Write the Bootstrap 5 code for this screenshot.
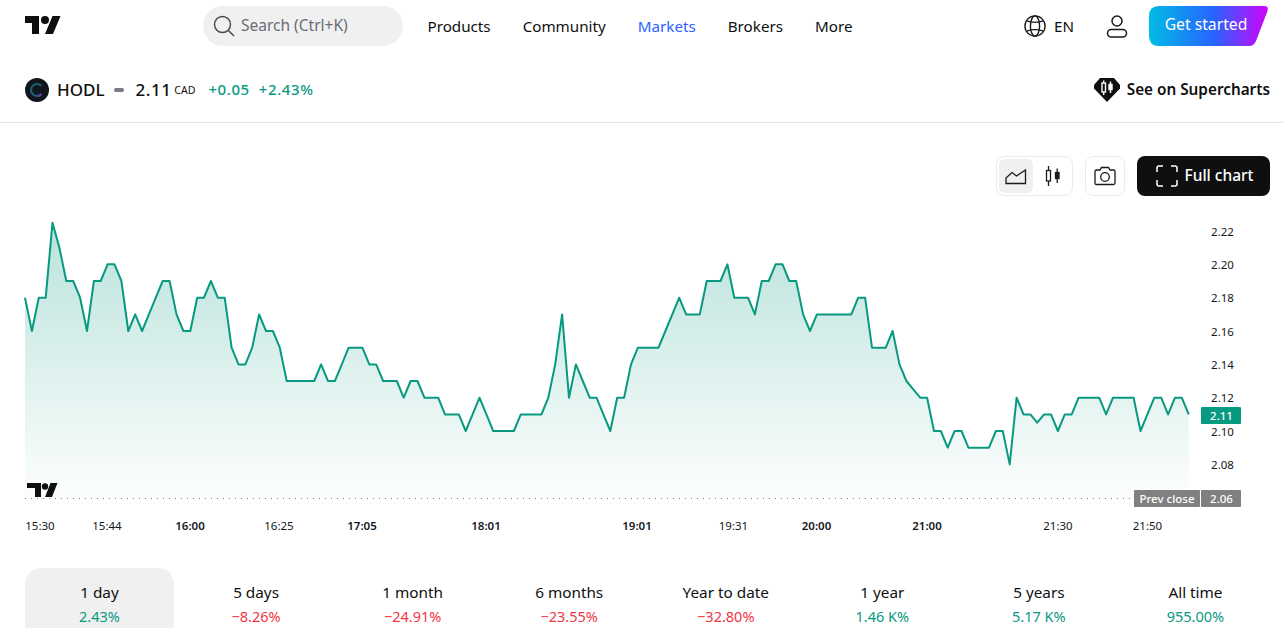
<!DOCTYPE html>
<html lang="en">
<head>
<meta charset="utf-8">
<title>HODL chart</title>
<link href="https://cdn.jsdelivr.net/npm/bootstrap@5.3.0/dist/css/bootstrap.min.css" rel="stylesheet">
<style>
html,body{overflow:hidden;height:628px;background:#fff}
body{font-family:"Noto Sans","Liberation Sans",sans-serif;color:#0f0f0f;font-size:16px}
.tv-head{height:52px;padding:6px 14px 0 25px}
.tv-logo{width:36px;height:28px;margin-top:6px;margin-right:142px;display:block;fill:#0f0f0f}
.tv-search{width:200px;height:40px;border-radius:20px;background:#f0f0f0;color:#6a6d78;font-size:15.500px;padding:0 0 0 10px;gap:6px;margin-right:24.500px}
.tv-nav{height:40px}
.tv-link{color:#0f0f0f;text-decoration:none;font-size:15.200px;margin-right:32px;white-space:nowrap}
.tv-link.is-on{color:#2962ff}
.tv-side{height:40px}
.tv-lang{margin:0 0 0 8px}
.tv-user{margin:0 21px 0 32px}
.tv-get{width:120px;height:40px;border:0;color:#fff;font-size:15.700px;padding:0 6px 3px 0;background:linear-gradient(90deg,#00bce5 0%,#2962ff 55%,#d500f9 100%);clip-path:path("M10 0H115Q120 0 118.500 5L107 35Q105 40 100 40H10Q0 40 0 30V10Q0 0 10 0Z")}
.tv-sym{height:71px;padding:5px 13px 0 25px;border-bottom:1px solid #e0e3eb}
.tv-coin{width:24px;height:24px;display:block}
.tv-name{font-size:17px;font-weight:500;margin-left:8px}
.tv-dash{width:10px;height:4px;border-radius:2px;background:#787b86;margin:0 12px 0 9px}
.tv-price{font-size:17px;font-weight:500;letter-spacing:.5px}
.tv-cur{font-size:10.500px;margin:3px 13px 0 3px}
.tv-chg{font-size:15px;font-weight:500;color:#089981;margin-right:9px;letter-spacing:.6px}
.tv-super{font-size:15.300px;font-weight:600;color:#0f0f0f;text-decoration:none;gap:7px}
.tv-tools{padding:33px 13px 0 0;gap:12px}
.tv-group{height:40px;border:1px solid #ebebeb;border-radius:8px;padding:2px;gap:3px}
.tv-ico{width:34px;height:34px;border-radius:6px;border:0;background:transparent;padding:0}
.tv-ico.is-on{background:#f0f0f0}
.tv-ico svg,.tv-single svg{display:block;margin:auto}
.tv-single{width:40px;height:40px;border:1px solid #ebebeb;border-radius:8px;background:#fff;padding:0}
.tv-full{width:133px;height:40px;border:0;border-radius:8px;background:#0f0f0f;color:#fff;font-size:15.500px;font-weight:500;gap:7px;padding:0 0 0 2px}
.tv-full span{padding-bottom:1px}
.tv-plot{display:block;width:1283px;height:352px}
.tv-plot text{font-family:"Noto Sans","Liberation Sans",sans-serif;font-size:11.500px;fill:#131722;text-anchor:middle;dominant-baseline:central}
.tv-plot .tv-bold{font-weight:600}
.tv-plot .tv-white{fill:#fff;font-weight:500}
.tv-tabs{padding:20px 13px 0 25px}
.tv-tab{width:149px;height:76px;border-radius:16px 16px 0 0;padding-top:14px;text-align:center;font-size:15.300px;line-height:20px}
.tv-tab.is-on{background:#f0f0f0}
.tv-tab span{display:block;margin-top:4px;font-size:14.500px}
.tv-up{color:#089981}
.tv-down{color:#f23645}
</style>
</head>
<body>
<header class="tv-head d-flex align-items-start">
  <svg class="tv-logo" viewBox="0 0 36 28"><path d="M14 22H7V11H0V4h14v18zM28 22h-8l7.500-18h8L28 22z"/><circle cx="20" cy="8" r="4"/></svg>
  <div class="tv-search d-flex align-items-center">
    <svg width="22" height="22" viewBox="0 0 22 22" fill="none" stroke="#4a4a4a" stroke-width="1.500"><circle cx="9.500" cy="9.500" r="8"/><path d="M15 15l6 6"/></svg>
    <span>Search (Ctrl+K)</span>
  </div>
  <nav class="tv-nav d-flex align-items-center">
    <a class="tv-link" href="#">Products</a>
    <a class="tv-link" href="#">Community</a>
    <a class="tv-link is-on" href="#">Markets</a>
    <a class="tv-link" href="#">Brokers</a>
    <a class="tv-link" href="#">More</a>
  </nav>
  <div class="tv-side d-flex align-items-center ms-auto">
    <svg width="22" height="22" viewBox="0 0 24 24" fill="none" stroke="#1a1a1a" stroke-width="1.500"><circle cx="12" cy="12" r="11"/><ellipse cx="12" cy="12" rx="5" ry="11"/><path d="M3 6.500q9 3 18 0M3 17.500q9-3 18 0"/></svg>
    <a class="tv-link tv-lang" href="#">EN</a>
    <svg class="tv-user" width="22" height="24" viewBox="0 0 22 24" fill="none" stroke="#1a1a1a" stroke-width="1.500"><circle cx="11" cy="7" r="5"/><rect x="1.500" y="15.500" width="19" height="7.500" rx="3.700"/></svg>
    <button class="tv-get" type="button">Get started</button>
  </div>
</header>

<section class="tv-sym d-flex align-items-center">
  <svg class="tv-coin" viewBox="0 0 24 24"><circle cx="12" cy="12" r="12" fill="#11161d"/><path d="M16.500 8A6 6 0 1 0 16.500 16" fill="none" stroke="#1c5f78" stroke-width="2.200"/><path d="M12 18a6 6 0 0 0 4.500-2" fill="none" stroke="#5b3fa8" stroke-width="2.200"/></svg>
  <span class="tv-name">HODL</span>
  <span class="tv-dash"></span>
  <span class="tv-price">2.11</span>
  <span class="tv-cur">CAD</span>
  <span class="tv-chg">+0.05</span>
  <span class="tv-chg">+2.43%</span>
  <a class="tv-super d-flex align-items-center ms-auto" href="#">
    <svg width="26" height="24" viewBox="0 0 26 24"><path d="M6 0H20L26 7V10.500L13 24L0 10.500V7Z" fill="#0f0f0f"/><g fill="none" stroke="#fff" stroke-width="1.400"><rect x="8" y="5" width="3.500" height="9"/><path d="M9.700 2.500V5M9.700 14V17"/><rect x="15" y="6.500" width="3" height="5" fill="#fff"/><path d="M16.500 3.500V6.500M16.500 11.500V15"/></g></svg>
    See on Supercharts
  </a>
</section>

<div class="tv-tools d-flex justify-content-end">
  <div class="tv-group d-flex">
    <button class="tv-ico is-on" type="button" aria-label="Area"><svg width="22" height="18" viewBox="0 0 22 18" fill="none" stroke="#1a1a1a" stroke-width="1.300"><path d="M1 16.500V11L7 5.500L11.500 9L20.500 3V16.500Z"/></svg></button>
    <button class="tv-ico" type="button" aria-label="Candles"><svg width="16" height="20" viewBox="0 0 16 20" fill="none" stroke="#1a1a1a" stroke-width="1.300"><rect x="1.500" y="4.500" width="4" height="10.500"/><path d="M3.500 0V4.500M3.500 15V20"/><rect x="10.500" y="6.500" width="3.500" height="6" fill="#1a1a1a"/><path d="M12.200 2.500V6.500M12.200 12.500V17"/></svg></button>
  </div>
  <button class="tv-single" type="button" aria-label="Snapshot"><svg width="22" height="20" viewBox="0 0 22 20" fill="none" stroke="#1a1a1a" stroke-width="1.300"><path d="M1 5.500Q1 4 2.500 4H6L7.500 1.500H14.500L16 4H19.500Q21 4 21 5.500V17Q21 18.500 19.500 18.500H2.500Q1 18.500 1 17Z"/><circle cx="11" cy="11" r="4.300"/></svg></button>
  <button class="tv-full d-flex align-items-center justify-content-center" type="button">
    <svg width="22" height="22" viewBox="0 0 22 22" fill="none" stroke="#fff" stroke-width="1.500"><path d="M7 1H3Q1 1 1 3V7M15 1H19Q21 1 21 3V7M7 21H3Q1 21 1 19V15M15 21H19Q21 21 21 19V15"/></svg>
    <span>Full chart</span>
  </button>
</div>

<svg class="tv-plot" viewBox="0 196 1283 352">
  <defs><linearGradient id="tvfill" gradientUnits="userSpaceOnUse" x1="0" y1="222" x2="0" y2="498"><stop offset="0" stop-color="#089981" stop-opacity=".28"/><stop offset="1" stop-color="#089981" stop-opacity=".01"/></linearGradient></defs>
  <polygon id="tvarea" fill="url(#tvfill)" points=""/>
  <polyline id="tvline" fill="none" stroke="#089981" stroke-width="2" stroke-linejoin="round" points=""/>
  <path d="M25 498.500H1134" stroke="#7a7a7a" stroke-dasharray="1 5"/>
  <path d="M27 483h14v14h-6v-9h-8zM45 497l5.500-14h7L52 497z" fill="#0f0f0f"/><circle cx="45" cy="486.500" r="3.200" fill="#0f0f0f"/>
  <g>
    <text x="1222.500" y="231">2.22</text><text x="1222.500" y="264">2.20</text><text x="1222.500" y="297.500">2.18</text><text x="1222.500" y="331">2.16</text><text x="1222.500" y="364.500">2.14</text><text x="1222.500" y="397.500">2.12</text><text x="1222.500" y="431">2.10</text><text x="1222.500" y="464">2.08</text>
  </g>
  <rect x="1201" y="407" width="40" height="17" rx="1" fill="#089981"/><text class="tv-white" x="1221.500" y="415.500">2.11</text>
  <rect x="1134" y="490" width="66" height="17" rx="1" fill="#808080"/><text class="tv-white" x="1167" y="498.500">Prev close</text>
  <rect x="1201" y="490" width="40" height="17" rx="1" fill="#808080"/><text class="tv-white" x="1221.500" y="498.500">2.06</text>
  <g>
    <text x="40" y="525.500">15:30</text><text x="107" y="525.500">15:44</text><text class="tv-bold" x="190" y="525.500">16:00</text><text x="279" y="525.500">16:25</text><text class="tv-bold" x="362" y="525.500">17:05</text><text class="tv-bold" x="486" y="525.500">18:01</text><text class="tv-bold" x="637" y="525.500">19:01</text><text x="733.500" y="525.500">19:31</text><text class="tv-bold" x="816.500" y="525.500">20:00</text><text class="tv-bold" x="927" y="525.500">21:00</text><text x="1058" y="525.500">21:30</text><text x="1147.500" y="525.500">21:50</text>
  </g>
</svg>

<div class="tv-tabs d-flex justify-content-between">
  <div class="tv-tab is-on">1 day<span class="tv-up">2.43%</span></div>
  <div class="tv-tab">5 days<span class="tv-down">−8.26%</span></div>
  <div class="tv-tab">1 month<span class="tv-down">−24.91%</span></div>
  <div class="tv-tab">6 months<span class="tv-down">−23.55%</span></div>
  <div class="tv-tab">Year to date<span class="tv-down">−32.80%</span></div>
  <div class="tv-tab">1 year<span class="tv-up">1.46 K%</span></div>
  <div class="tv-tab">5 years<span class="tv-up">5.17 K%</span></div>
  <div class="tv-tab">All time<span class="tv-up">955.00%</span></div>
</div>

<script src="https://cdn.jsdelivr.net/npm/bootstrap@5.3.0/dist/js/bootstrap.bundle.min.js"></script>
<script>
var vals=[18,16,18,18,22.5,21,19,19,18,16,19,19,20,20,19,16,17,16,17,18,19,19,17,16,16,18,18,19,18,18,15,14,14,15,17,16,16,15,13,13,13,13,13,14,13,13,14,15,15,15,14,14,13,13,13,12,13,13,12,12,12,11,11,11,10,11,12,11,10,10,10,10,11,11,11,11,12,14,17,12,14,13,12,12,11,10,12,12,14,15,15,15,15,16,17,18,17,17,17,19,19,19,20,18,18,18,17,19,19,20,20,19,19,17,16,17,17,17,17,17,17,18,18,15,15,15,16,14,13,12.5,12,12,10,10,9,10,10,9,9,9,9,10,10,8,12,11,11,10.5,11,11,10,11,11,12,12,12,12,11,12,12,12,12,10,11,12,12,11,12,12,11];
var pts=vals.map(function(v,i){return (25+i*6.886).toFixed(1)+","+(231+(22-v)*16.67).toFixed(1)});
document.getElementById("tvline").setAttribute("points",pts.join(" "));
document.getElementById("tvarea").setAttribute("points","25,498 "+pts.join(" ")+" 1188.7,498");
</script>
</body>
</html>
